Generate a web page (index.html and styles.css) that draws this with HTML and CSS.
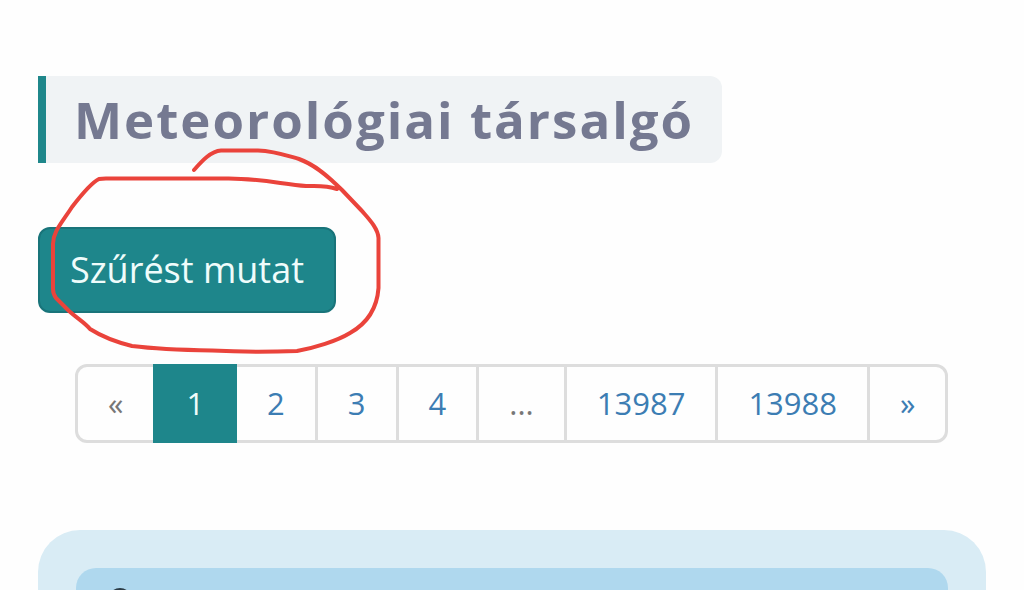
FILE: index.html
```html
<!DOCTYPE html>
<html lang="hu">
<head>
<meta charset="utf-8">
<meta name="viewport" content="width=device-width, initial-scale=1">
<title>Meteorológiai társalgó</title>
<link rel="stylesheet" href="styles.css">
</head>
<body>
<main class="page">
  <h1 class="title">Meteorológiai társalgó</h1>
  <button class="filter-button" type="button">Szűrést mutat</button>
  <nav aria-label="Lapozó">
    <ul class="pagination">
      <li class="page-item muted"><span>«</span></li>
      <li class="page-item active"><a href="#1" aria-current="page">1</a></li>
      <li class="page-item"><a href="#2">2</a></li>
      <li class="page-item"><a href="#3">3</a></li>
      <li class="page-item"><a href="#4">4</a></li>
      <li class="page-item muted"><span>...</span></li>
      <li class="page-item"><a href="#13987">13987</a></li>
      <li class="page-item"><a href="#13988">13988</a></li>
      <li class="page-item"><a href="#next">»</a></li>
    </ul>
  </nav>
  <section class="post">
    <div class="post-header">
      <svg class="post-icon" width="24" height="24" viewBox="0 0 24 24" aria-hidden="true"><circle cx="12" cy="12" r="10" fill="none" stroke="#2b3c46" stroke-width="4"/></svg>
    </div>
  </section>
  <svg class="marker" width="400" height="370" viewBox="0 0 400 370" aria-hidden="true">
    <path d="M194 170C202 161 211 151 221 150.500H258C274 151 285 155 299 159C316 165 330 178 342 190L362 211C368 218 378 228 378.500 238V288C377 309 366 324 350 333C337 341 314 348 297 351C268 352 240 352 212 350.500C184 350 156 349 132 346C116 342 101 336 90 329C85 323 78 319 69 311L56 298Q53 294 53 289V244C53 232 61 224 72 207C82 194 91 183 99 179Q102 178.500 106 178.500H226C256 178 282 184 306 186C317 186 326 185 337 189"/>
  </svg>
</main>
</body>
</html>
```
FILE: styles.css
```css
* {
  box-sizing: border-box;
}

body {
  margin: 0;
  background: #fefefe;
  font-family: "Open Sans", "Noto Sans", sans-serif;
}

.page {
  position: relative;
  display: flex;
  flex-direction: column;
  align-items: flex-start;
  height: 100vh;
  overflow: hidden;
  padding: 76px 38px 0;
}

.title {
  margin: 0 0 64px;
  padding: 8px 28px;
  border-left: 8px solid #1f878b;
  border-radius: 0 12px 12px 0;
  background: #f0f3f5;
  color: #757991;
  font-size: 51px;
  font-weight: 700;
  line-height: 71px;
  letter-spacing: 2px;
}

.filter-button {
  margin: 0 0 51px;
  padding: 16px 30px;
  border: 2px solid #19747a;
  border-radius: 12px;
  background: #1e868b;
  color: #effcfb;
  font: 36px/50px "Open Sans", "Noto Sans", sans-serif;
}

.pagination {
  display: flex;
  margin: 0 0 87px;
  padding: 0 0 0 37px;
  list-style: none;
}

.page-item {
  color: #3c7db3;
  font-size: 31px;
  line-height: 43px;
}

.page-item + .page-item {
  margin-left: -3px;
}

.page-item > * {
  display: block;
  padding: 15px 30px;
  border: 3px solid #ddd;
  color: inherit;
  text-decoration: none;
}

.page-item:first-child > * {
  border-radius: 12px 0 0 12px;
}

.page-item:last-child > * {
  border-radius: 0 12px 12px 0;
}

.muted {
  color: #777;
}

.active {
  z-index: 1;
  color: #effcfb;
}

.active > * {
  border-color: #1e868b;
  background: #1e868b;
}

.post {
  flex: 1 0 auto;
  align-self: stretch;
  padding: 38px 38px 0;
  border-radius: 42px 42px 0 0;
  background: #d9ecf5;
}

.post-header {
  padding: 20px 32px;
  border-radius: 20px 20px 0 0;
  background: #afd8ee;
}

.post-icon {
  display: block;
}

.marker {
  position: absolute;
  top: 0;
  left: 0;
  fill: none;
  stroke: #ea433b;
  stroke-width: 4;
  stroke-linecap: round;
  stroke-linejoin: round;
  pointer-events: none;
}
```
